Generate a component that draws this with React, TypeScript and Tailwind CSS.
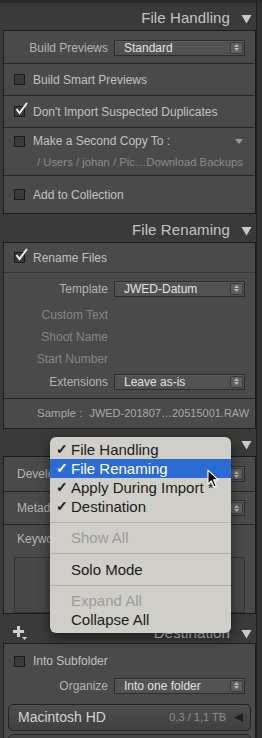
import type { ReactNode } from 'react';

const FONT = { fontFamily: '"Liberation Sans", Arial, sans-serif' };

function Triangle({ className = '' }: { className?: string }) {
    return (
        <svg width="11" height="10" viewBox="0 0 11 10" className={className}>
            <path d="M0.5 1 L10.5 1 L5.5 9.5 Z" fill="#c9c9c9" />
        </svg>
    );
}

function Header({ title, left, className = 'pt-[4px]' }: { title: string; left?: ReactNode; className?: string }) {
    return (
        <div className={`flex items-center h-full pr-[10px] ${className}`}>
            <div className="w-[20px] pl-[10px]">{left}</div>
            <span className="ml-auto text-[15px] text-[#c4c4c4] tracking-[0.1px] whitespace-nowrap">{title}</span>
            <Triangle className="ml-[11px] mt-[1px]" />
        </div>
    );
}

function Checkbox({ checked = false }: { checked?: boolean }) {
    return (
        <div className="relative w-[11px] h-[11px] border border-[#1c1c1c] bg-[#3a3a3a] shrink-0">
            {checked && (
                <svg width="14" height="14" viewBox="0 0 14 14" className="absolute -top-[5px] left-[0px]">
                    <path d="M1.5 7 L4.5 11 L12 1" stroke="#efefef" strokeWidth="2" fill="none" />
                </svg>
            )}
        </div>
    );
}

function CheckRow({ label, checked, className = '' }: { label: string; checked?: boolean; className?: string }) {
    return (
        <div className={`flex items-center gap-[8px] pl-[10px] text-[12px] text-[#c2c2c2] whitespace-nowrap ${className}`}>
            <Checkbox checked={checked} />
            <span>{label}</span>
        </div>
    );
}

function Select({ value }: { value: string }) {
    return (
        <div className="flex items-center w-[131px] h-[16px] border border-[#2c2c2c] bg-[#525252] shadow-[inset_0_1px_0_#5c5c5c]">
            <span className="flex-1 pl-[9px] text-[12px] text-[#e2e2e2] leading-none whitespace-nowrap">{value}</span>
            <div className="w-[13px] h-[12px] mr-[1px] rounded-[2px] bg-[#5e5e5e] border border-[#3a3a3a] flex flex-col items-center justify-center gap-[1px]">
                <svg width="5" height="3" viewBox="0 0 5 3"><path d="M0 3 L2.5 0 L5 3 Z" fill="#b8b8b8" /></svg>
                <svg width="5" height="3" viewBox="0 0 5 3"><path d="M0 0 L2.5 3 L5 0 Z" fill="#b8b8b8" /></svg>
            </div>
        </div>
    );
}

function Field({ label, value, dim = false, className = '' }: { label: string; value?: string; dim?: boolean; className?: string }) {
    return (
        <div className={`flex items-center ${className}`}>
            <span className={`w-[104px] text-right text-[12px] whitespace-nowrap ${dim ? 'text-[#858585]' : 'text-[#b4b4b4]'}`}>{label}</span>
            <div className="ml-[6px]">{value !== undefined && <Select value={value} />}</div>
        </div>
    );
}

const MENU_ITEMS = [
    { label: 'File Handling', check: true },
    { label: 'File Renaming', check: true, active: true },
    { label: 'Apply During Import *', check: true },
    { label: 'Destination', check: true },
];

function Menu() {
    return (
        <div className="absolute left-[50px] top-[434px] w-[181px] h-[196px] rounded-[6px] bg-[#cfcec9] shadow-[0_4px_12px_rgba(0,0,0,0.5)] pt-[3px] text-[15px] text-[#1b1b1b] leading-[19px] whitespace-nowrap z-10">
            {MENU_ITEMS.map(item => (
                <div
                    key={item.label}
                    className={`flex items-center h-[19px] pl-[6px] ${item.active ? 'bg-[#2a6bd4] text-white' : ''}`}
                >
                    <span className="w-[15px] text-[14px] font-bold">✓</span>
                    <span>{item.label}</span>
                </div>
            ))}
            <div className="h-px bg-[#b3b2ae] mt-[6px] mb-[5px]" />
            <div className="pl-[21px] text-[#9c9b98]">Show All</div>
            <div className="h-px bg-[#b3b2ae] mt-[6px] mb-[6px]" />
            <div className="pl-[21px]">Solo Mode</div>
            <div className="h-px bg-[#b3b2ae] mt-[6px] mb-[5px]" />
            <div className="pl-[21px] text-[#9c9b98]">Expand All</div>
            <div className="pl-[21px]">Collapse All</div>
        </div>
    );
}

function Cursor() {
    return (
        <svg width="15" height="19" viewBox="0 0 16 20" className="absolute left-[207px] top-[466px] z-20">
            <path d="M1 1 L1 16 L4.5 12.5 L7.5 19 L10 18 L7 11.5 L12 11.5 Z" fill="#111" stroke="#fff" strokeWidth="1.2" strokeLinejoin="round" />
        </svg>
    );
}

function PlusIcon() {
    return (
        <div className="relative w-[14px] h-[14px]">
            <div className="absolute left-[4px] top-0 w-[3px] h-[11px] bg-[#d0d0d0]" />
            <div className="absolute left-0 top-[4px] w-[11px] h-[3px] bg-[#d0d0d0]" />
            <svg width="5" height="3" viewBox="0 0 5 3" className="absolute left-[9px] top-[11px]"><path d="M0 0 L5 0 L2.5 3 Z" fill="#d0d0d0" /></svg>
        </div>
    );
}

export default function App() {
    return (
        <div className="relative w-[262px] h-[738px] overflow-hidden bg-[#3a3a3a] border-t-[3px] border-[#2a2a2a]" style={FONT}>
            <div className="flex flex-col pl-[3px] pr-[6px] w-full">
                <div className="h-[27px] -mr-[6px]"><Header title="File Handling" /></div>

                <div className="border border-[#1c1c1c] bg-[#4a4a4a] flex flex-col">
                    <div className="h-[33px] flex items-center border-b border-[#252525] pt-[1px]">
                        <Field label="Build Previews" value="Standard" />
                    </div>
                    <CheckRow label="Build Smart Previews" className="h-[32px] border-b border-[#252525]" />
                    <CheckRow label="Don't Import Suspected Duplicates" checked className="h-[32px] border-b border-[#252525]" />
                    <div className="h-[48px] border-b border-[#252525] flex flex-col justify-center">
                        <div className="flex items-center">
                            <CheckRow label="Make a Second Copy To :" />
                            <svg width="8" height="5" viewBox="0 0 8 5" className="ml-auto mr-[12px]"><path d="M0 0 L8 0 L4 5 Z" fill="#9a9a9a" /></svg>
                        </div>
                        <div className="pl-[33px] mt-[4px] text-[11.3px] text-[#8a8a8a] whitespace-nowrap">/ Users / johan / Pic…Download Backups</div>
                    </div>
                    <CheckRow label="Add to Collection" className="h-[37px]" />
                </div>

                <div className="h-[28px] -mr-[6px]"><Header title="File Renaming" /></div>

                <div className="border border-[#1c1c1c] bg-[#4a4a4a] flex flex-col">
                    <CheckRow label="Rename Files" checked className="h-[30px] border-b border-[#3a3a3a]" />
                    <div className="h-[126px] border-b border-[#252525] flex flex-col pt-[7px]">
                        <Field label="Template" value="JWED-Datum" className="h-[17px]" />
                        <Field label="Custom Text" dim className="h-[17px] mt-[9px]" />
                        <Field label="Shoot Name" dim className="h-[17px] mt-[5px]" />
                        <Field label="Start Number" dim className="h-[17px] mt-[5px]" />
                        <Field label="Extensions" value="Leave as-is" className="h-[17px] mt-[6px]" />
                    </div>
                    <div className="h-[29px] flex items-center text-[11.5px] text-[#a8a8a8] pl-[33px] whitespace-nowrap">
                        <span>Sample :</span>
                        <span className="ml-[7px] text-[11px]">JWED-201807…20515001.RAW</span>
                    </div>
                </div>

                <div className="h-[27px] -mr-[6px]"><Header title="Apply During Import" /></div>

                <div className="border border-[#1c1c1c] bg-[#4a4a4a] flex flex-col">
                    <div className="h-[35px] flex items-center border-b border-[#252525]">
                        <span className="pl-[13px] w-[110px] text-[12px] text-[#b4b4b4] whitespace-nowrap">Develop Settings</span>
                        <Select value="None" />
                    </div>
                    <div className="h-[33px] flex items-center border-b border-[#252525]">
                        <span className="pl-[13px] w-[110px] text-[12px] text-[#b4b4b4] whitespace-nowrap">Metadata</span>
                        <Select value="None" />
                    </div>
                    <div className="h-[88px] flex flex-col px-[10px] pt-[5px]">
                        <span className="text-[12px] text-[#b4b4b4] pl-[3px]">Keywords</span>
                        <div className="mt-[9px] h-[56px] border border-[#333] bg-[#474747]" />
                    </div>
                </div>

                <div className="h-[29px] -mr-[6px]"><Header title="Destination" left={<PlusIcon />} className="pt-[9px]" /></div>

                <div className="border border-[#1c1c1c] bg-[#4a4a4a] flex flex-col pb-[4px]">
                    <CheckRow label="Into Subfolder" className="h-[32px] pt-[2px]" />
                    <Field label="Organize" value="Into one folder" className="h-[17px] mt-[1px]" />
                    <div className="mx-[4px] mt-[10px] h-[27px] rounded-[5px] border border-[#232323] bg-gradient-to-b from-[#4d4d4d] to-[#414141] flex items-center pl-[9px] pr-[7px]">
                        <span className="text-[14px] text-[#d4d4d4]">Macintosh HD</span>
                        <span className="ml-auto text-[11px] text-[#8e8e8e]">0,3 / 1,1 TB</span>
                        <svg width="9" height="9" viewBox="0 0 9 9" className="ml-[8px]"><path d="M9 0 L9 9 L0 4.5 Z" fill="#1f1f1f" /></svg>
                    </div>
                    <div className="mx-[4px] mt-[3px] h-[27px] rounded-[5px] border border-[#232323] bg-[#454545]" />
                </div>
            </div>

            <div className="absolute right-0 top-0 w-[6px] h-full bg-[#333] border-l border-[#222]" />
            <Menu />
            <Cursor />
        </div>
    );
}
